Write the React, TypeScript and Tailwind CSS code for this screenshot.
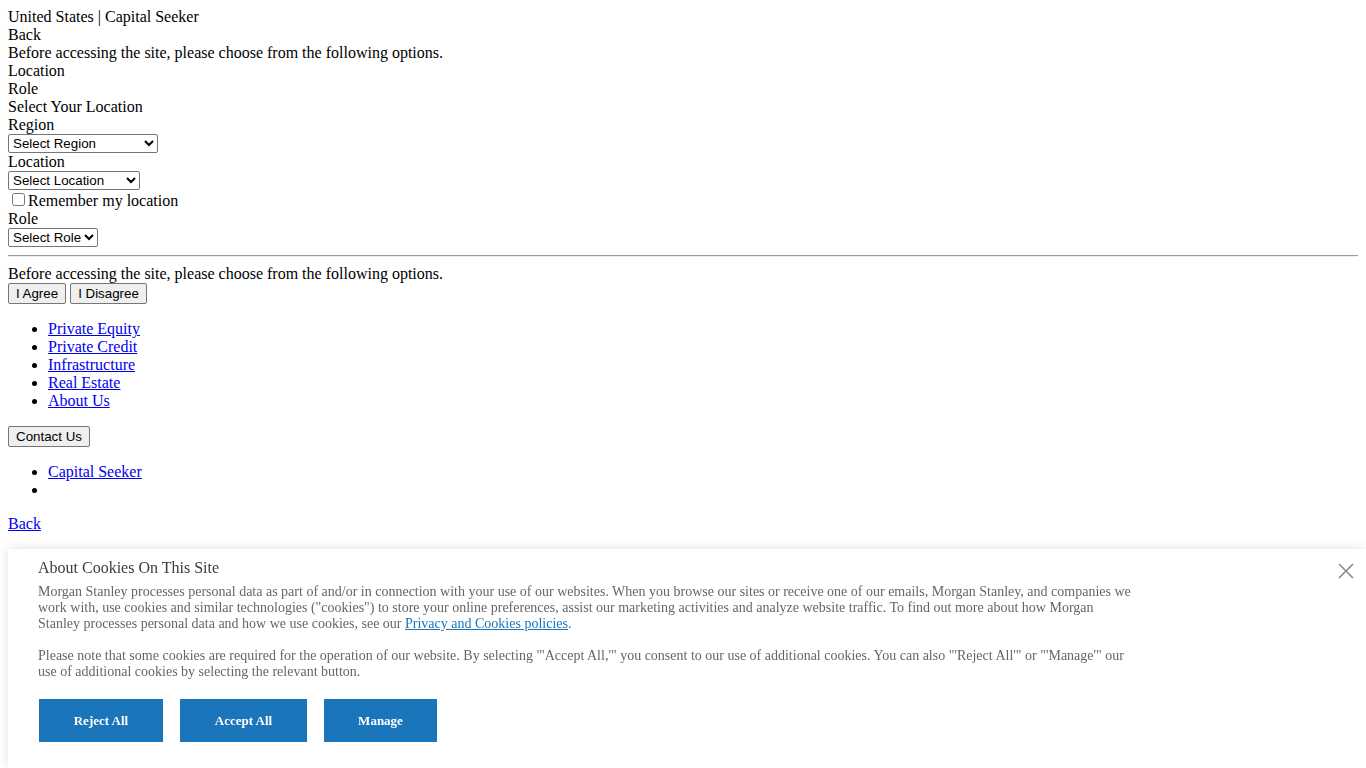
import React from "react";

const serif = "font-['Liberation_Serif','Times_New_Roman',serif]";
const sans = "font-['Liberation_Sans',Arial,sans-serif]";

function NativeSelect({ label, width }: { label: string; width: string }) {
  return (
    <div className="h-[19px] flex">
      <select
        className={`${sans} text-[13.33px] text-black bg-white border border-[#767676] rounded-[2px] h-[19px] pl-0 ${width}`}
        defaultValue=""
      >
        <option value="">{label}</option>
      </select>
    </div>
  );
}

function NativeButton({ children, width }: { children: React.ReactNode; width: string }) {
  return (
    <button
      className={`${sans} text-[13.33px] text-black bg-[#efefef] border border-[#767676] rounded-[2px] h-[21px] px-[6px] leading-[19px] ${width}`}
    >
      {children}
    </button>
  );
}

export default function App() {
  return (
    <div className={`${serif} text-[16px] leading-[18px] text-black bg-white min-h-[768px] p-[8px]`}>
      <div>United States | Capital Seeker</div>
      <div>Back</div>
      <div>Before accessing the site, please choose from the following options.</div>
      <div>Location</div>
      <div>Role</div>
      <div>Select Your Location</div>
      <div>Region</div>
      <NativeSelect label="Select Region" width="w-[150px]" />
      <div>Location</div>
      <NativeSelect label="Select Location" width="w-[132px]" />
      <div className="h-[20px] flex items-end">
        <input type="checkbox" className="w-[13px] h-[13px] ml-[4px] mr-[3px] mb-[4px]" />
        <span>Remember my location</span>
      </div>
      <div>Role</div>
      <NativeSelect label="Select Role" width="w-[90px]" />
      <div className="my-[8px] border-t border-[#9a9a9a] border-b border-b-[#eeeeee]" />
      <div>Before accessing the site, please choose from the following options.</div>
      <div className="flex gap-[4px]">
        <NativeButton width="w-[58px]">I Agree</NativeButton>
        <NativeButton width="w-[77px]">I Disagree</NativeButton>
      </div>
      <ul className="list-disc pl-[40px] my-[16px]">
        {["Private Equity", "Private Credit", "Infrastructure", "Real Estate", "About Us"].map((t) => (
          <li key={t}>
            <a href="#" className="text-[#0000ee] underline">
              {t}
            </a>
          </li>
        ))}
      </ul>
      <NativeButton width="w-[82px]">Contact Us</NativeButton>
      <ul className="list-disc pl-[40px] my-[16px]">
        <li>
          <a href="#" className="text-[#0000ee] underline">
            Capital Seeker
          </a>
        </li>
        <li className="h-[18px]"></li>
      </ul>
      <div>
        <a href="#" className="text-[#0000ee] underline">
          Back
        </a>
      </div>

      <div className="fixed left-[8px] right-0 bottom-0 h-[219px] bg-white shadow-[0_0_10px_rgba(0,0,0,0.12)]">
        <div className="pl-[30px] pt-[10px] relative">
          <div className="text-[16px] leading-[18px] text-[#3c3c3c]">About Cookies On This Site</div>
          <div className="max-w-[1100px] text-[14px] leading-[16px] text-[#666666] mt-[7px]">
            <p>
              Morgan Stanley processes personal data as part of and/or in connection with your use of our websites. When you
              browse our sites or receive one of our emails, Morgan Stanley, and companies we work with, use cookies and similar
              technologies ("cookies") to store your online preferences, assist our marketing activities and analyze website
              traffic. To find out more about how Morgan Stanley processes personal data and how we use cookies, see our{" "}
              <a href="#" className="text-[#1a75bb] underline">
                Privacy and Cookies policies
              </a>
              .
            </p>
            <p className="mt-[16px]">
              Please note that some cookies are required for the operation of our website. By selecting "'Accept All,'" you
              consent to our use of additional cookies. You can also "'Reject All'" or "'Manage'" our use of additional cookies
              by selecting the relevant button.
            </p>
          </div>
          <div className="flex gap-[17px] mt-[19px] ml-[1px]">
            {[
              ["Reject All", "w-[124px]"],
              ["Accept All", "w-[127px]"],
              ["Manage", "w-[113px]"],
            ].map(([t, w]) => (
              <button
                key={t}
                className={`${w} h-[43px] bg-[#1a75bb] text-white text-[13px] font-bold ${serif}`}
              >
                {t}
              </button>
            ))}
          </div>
        </div>
        <button className="absolute right-[12px] top-[14px] w-[16px] h-[16px]" aria-label="Close">
          <svg viewBox="0 0 16 16" width="16" height="16">
            <path d="M1 1 L15 15 M15 1 L1 15" stroke="#8a8a8a" strokeWidth="1.6" fill="none" />
          </svg>
        </button>
      </div>
    </div>
  );
}
